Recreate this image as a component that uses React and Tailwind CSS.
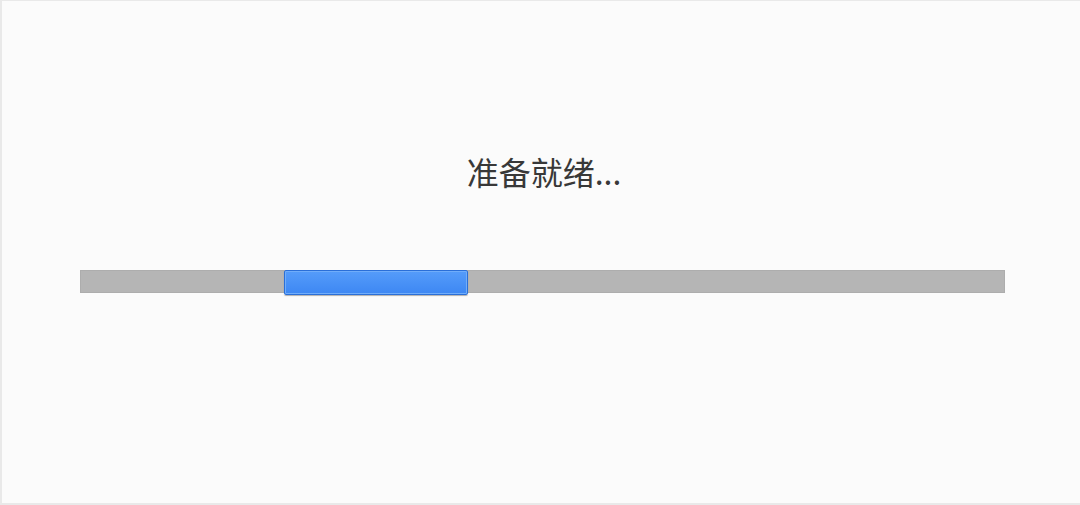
export default function App() {
  return (
    <div
      className="h-[505px] w-[1080px] bg-[#fbfbfb] border-l-2 border-t border-b-2 border-[#e9e9e9] flex flex-col"
      style={{ fontFamily: '"Noto Sans CJK SC", "Noto Sans", sans-serif' }}
    >
      <div className="pt-[148px] text-center text-[32px] leading-[44px] text-[#383838] pl-[6px]">
        准备就绪...
      </div>

      <div className="mt-[77px] ml-[78px] w-[925px] h-[23px] bg-[#b5b5b5] border border-[#adadad] relative">
        <div className="absolute left-[203px] top-[-1px] w-[184px] h-[25px] rounded-[2px] border border-[#2a6fd8] bg-gradient-to-b from-[#559cfa] to-[#3d87f3] shadow-[0_1px_1px_rgba(0,0,0,0.3)]">
          <div className="h-full w-full border border-[#70adfa] rounded-[1px]" />
        </div>
      </div>
    </div>
  );
}
